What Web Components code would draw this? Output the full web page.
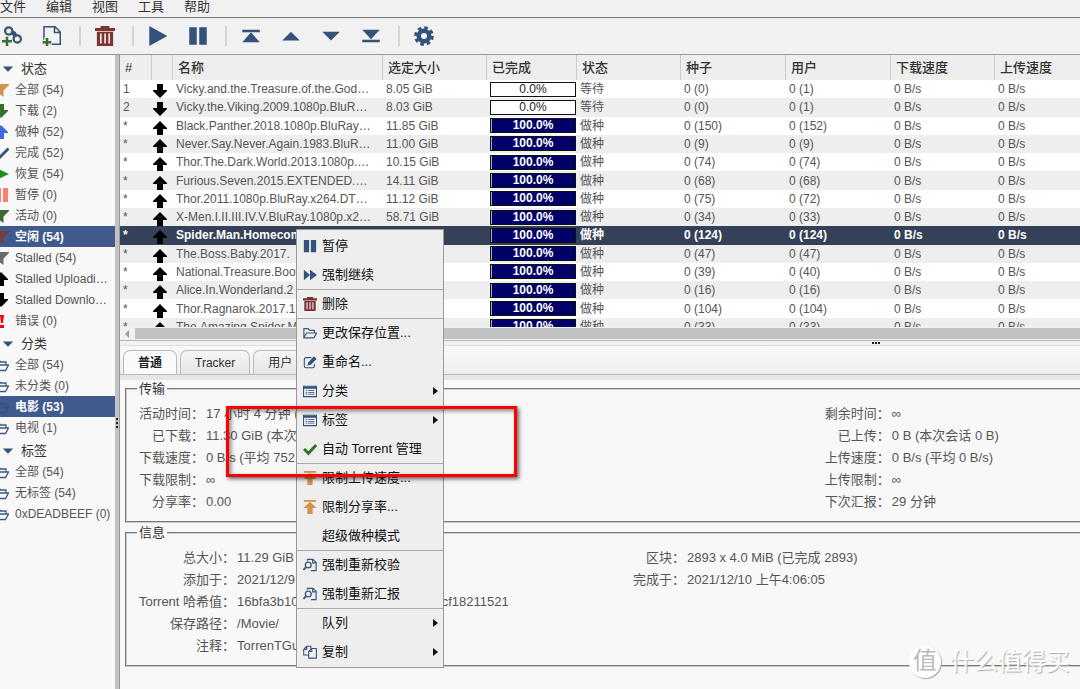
<!DOCTYPE html>
<html lang="zh-CN">
<head>
<meta charset="utf-8">
<meta name="viewport" content="width=device-width, initial-scale=1">
<title>qBittorrent Web UI</title>
<style>
  html, body { margin: 0; height: 100%; }
  body {
    font: 13px/18px "Liberation Sans", "Noto Sans CJK SC", sans-serif;
    color: #555;
    background: #f8f8f8;
    overflow: hidden;
  }
</style>
</head>
<body>
<torrent-app></torrent-app>
<script>
const define = (name, html, setup) => {
  const template = document.createElement('template');
  template.innerHTML = html;
  customElements.define(name, class extends HTMLElement {
    connectedCallback() {
      if (this.shadowRoot) return;
      const root = this.attachShadow({ mode: 'open' });
      root.append(template.content.cloneNode(true));
      if (setup) setup(this, root);
    }
  });
};

/* Icons, all on a 16 x 16 grid */
const navy = '#35527a', red = '#7d3333', green = '#37702f', orange = '#d3934a';
const funnel = c => `<path fill="${c}" d="M0 2h16v1l-5.500 5.500V15L5.500 11.500v-3L0 3z"/>`;
const arrowUp = c => `<path fill="${c}" d="M8 1l7 7v1h-4v6H5V9H1V8z"/>`;
const arrowDown = c => `<path fill="${c}" d="M8 15l7-7V7h-4V1H5v6H1v1z"/>`;
const folder = c => `<path fill="none" stroke="${c}" stroke-width="1.300" d="M1 13V3h5l1.500 2h5.500v3M1 13.500l3-5.500h11.500l-3 5.500z"/>`;
const icons = {
  link: `<g fill="none" stroke="${navy}" stroke-width="1.800"><circle cx="5.400" cy="3.900" r="2.900"/><circle cx="12.200" cy="10.300" r="2.900"/><path d="M6.500 6.500q2.500-1 3.500 1.500M8 4.500q3 .5 3 3"/></g><path stroke="${green}" stroke-width="2" d="M4 8.500v7.500M0 12.200h8"/>`,
  addfile: `<path fill="none" stroke="${navy}" stroke-width="1.200" d="M1.600 14.600V.6h8.800l4.200 4.200v9.800zM10 1v4.200h4.500"/><path stroke="#f1f1f1" stroke-width="4" d="M4 9v7M0 13h8"/><path stroke="${green}" stroke-width="2" d="M4 9.500V16M.5 13h7"/>`,
  trash: `<path fill="${red}" fill-rule="evenodd" d="M4.500 0h7v1.500H16V4H0V1.500h4.500zM1.500 4.500h13V16h-13zM4 6v8h1.300V6zM7.400 6v8h1.300V6zM10.700 6v8H12V6z"/>`,
  play: `<path fill="${navy}" d="M1 0l14.500 8L1 16z"/>`,
  pause: `<path fill="${navy}" d="M1 1h6v14H1zM9 1h6v14H9z"/>`,
  top: `<path fill="${navy}" d="M1 3h14v2H1zM8 5l7 8H1z"/>`,
  up: `<path fill="${navy}" d="M8 4.500l7 7H1z"/>`,
  down: `<path fill="${navy}" d="M8 11.500l-7-7h14z"/>`,
  bottom: `<path fill="${navy}" d="M1 11h14v2H1zM8 10.500L1 3h14z"/>`,
  gear: `<circle cx="8" cy="8" r="4.200" fill="none" stroke="${navy}" stroke-width="3.600"/><circle cx="8" cy="8" r="6.700" fill="none" stroke="${navy}" stroke-width="2.400" stroke-dasharray="2.900 2.360"/>`,
  caret: `<path fill="${navy}" d="M2 5h12l-6 6z"/>`,
  filterOrange: funnel(orange), filterGreen: funnel('#376b2f'), filterRed: funnel('#753c3c'), filterGrey: funnel('#6b6b6b'),
  downGreen: arrowDown('#37702f'), upBlue: arrowUp('#4169e1'), upBlack: arrowUp('#000'), downBlack: arrowDown('#000'),
  tick: `<path fill="none" stroke="${navy}" stroke-width="2.800" d="M2 8l4 5 9.500-9.500"/>`,
  resume: `<path fill="#228b22" d="M3 2l13 6-13 6z"/>`,
  pausePink: `<path fill="#fa8072" d="M3 1h5v14H3zM10 1h5v14h-5z"/>`,
  error: `<path fill="#f00" d="M7 2h4l-1 8H8zM7 12h4v3H7z"/>`,
  folder: folder('#3d5a80'), folderDim: folder('#34517d'),
  force: `<path fill="${navy}" d="M1 2l7 6-7 6zM8 2l8 6-8 6z"/>`,
  edit: `<path fill="none" stroke="${navy}" stroke-width="1.200" d="M9.500 3H3.500Q1.500 3 1.500 5v7.500q0 2 2 2h7.500q2 0 2-2V10"/><path fill="${navy}" d="M6 8.500l6.500-7 3 3L9 11l-4 1z"/>`,
  list: `<path fill="none" stroke="${navy}" stroke-width="1.200" d="M.6 2.600h14.800v11.800H.6z"/><path fill="${navy}" d="M1 3h14v2.500H1zM3 7h2v1H3zM6 7h7v1H6zM3 9h2v1H3zM6 9h7v1H6zM3 11h2v1H3zM6 11h7v1H6z"/>`,
  check: `<path fill="none" stroke="${green}" stroke-width="3.400" d="M1.200 8l5 5L15 3.500"/>`,
  limit: `<path fill="${orange}" d="M1 0h14v2H1zM8 2l7.500 7H11v7H5V9H.5z"/>`,
  recheck: `<g fill="none" stroke="${navy}" stroke-width="1.300"><path d="M5 3V1.500h6.500L15 5v9.500H9M11 1.500V5.500h4"/><circle cx="6" cy="8" r="3.300" stroke-width="1.500"/><path stroke-width="2" d="M3.500 10.500L.5 13.500"/></g>`,
  copy: `<g fill="#eee" stroke="${navy}" stroke-width="1.200"><path d="M7 11.500H.8V5l3.200-3.500h5V6M4.200 1.500V5H1"/><path d="M6.500 15V7.500L10 4h5.300v11zM10 4v3.500H6.500"/></g>`
};
define('ui-icon', `<style>:host{display:block;width:14px;height:14px;flex:none}svg{display:block;width:100%;height:100%}</style>
<svg viewBox="0 0 16 16" aria-hidden="true"></svg>`,
  (el, root) => { root.querySelector('svg').innerHTML = icons[el.getAttribute('name')] || ''; });

/* Menu bar and tool bar */
define('menu-bar', `<style>
:host{display:block;background:#f1f1f1;border-bottom:1px solid #777;color:#333}
nav{display:flex;gap:20px;padding-bottom:1px;height:16px;align-items:center}
button{all:unset;line-height:14px;padding-bottom:2px}
</style><nav><button>文件</button><button>编辑</button><button>视图</button><button>工具</button><button>帮助</button></nav>`);

define('tool-button', `<style>:host{display:block}button{all:unset;display:grid;place-items:center;width:24px;height:24px}ui-icon{width:20px;height:20px}</style><button><ui-icon></ui-icon></button>`,
  (el, root) => {
    root.querySelector('button').setAttribute('aria-label', el.getAttribute('label'));
    const old = root.querySelector('ui-icon'), icon = document.createElement('ui-icon');
    icon.setAttribute('name', el.getAttribute('icon'));
    old.replaceWith(icon);
  });

define('tool-bar', `<style>
:host{display:flex;align-items:center;height:36px;background:#f1f1f1;border-bottom:1px solid #999}
div{display:flex;gap:16px;padding:0 15px 0 12px;border-right:2px solid #d4d4d4;height:20px;align-items:center}
div:first-of-type{padding-left:0}div:last-of-type{border:0}
</style>
<div><tool-button icon="link" label="添加链接"></tool-button><tool-button icon="addfile" label="添加文件"></tool-button></div>
<div><tool-button icon="trash" label="删除"></tool-button></div>
<div><tool-button icon="play" label="继续"></tool-button><tool-button icon="pause" label="暂停"></tool-button></div>
<div><tool-button icon="top" label="置顶"></tool-button><tool-button icon="up" label="上移"></tool-button><tool-button icon="down" label="下移"></tool-button><tool-button icon="bottom" label="置底"></tool-button></div>
<div><tool-button icon="gear" label="选项"></tool-button></div>`);

/* Side bar */
define('filter-group', `<style>
:host{display:block}
h2{display:flex;align-items:center;gap:6px;margin:0;padding:3px 0 0 1px;height:20px;font:inherit;font-size:13px;color:#333}
</style><section><h2><ui-icon name="caret"></ui-icon><span></span></h2><slot></slot></section>`,
  (el, root) => { root.querySelector('span').textContent = el.getAttribute('heading'); });

define('filter-item', `<style>
:host{display:block}
a{display:flex;align-items:center;gap:6px;height:21px;margin-left:-7px;color:inherit;text-decoration:none;white-space:nowrap}
ui-icon{width:16px;height:16px}
:host([selected]){background:#415a8d;color:#fff;font-weight:bold}
</style><a href="#"><slot name="icon"></slot><slot></slot></a>`,
  (el, root) => {
    const icon = document.createElement('ui-icon');
    icon.setAttribute('name', el.getAttribute('icon'));
    root.querySelector('slot').replaceWith(icon);
  });

define('side-bar', `<style>
:host{display:block;width:115px;flex:none;overflow:hidden;padding-top:1px;box-sizing:border-box;background:#f8f8f8;font-size:12px}
</style>
<filter-group heading="状态">
<filter-item icon="filterOrange">全部 (54)</filter-item>
<filter-item icon="downGreen">下载 (2)</filter-item>
<filter-item icon="upBlue">做种 (52)</filter-item>
<filter-item icon="tick">完成 (52)</filter-item>
<filter-item icon="resume">恢复 (54)</filter-item>
<filter-item icon="pausePink">暂停 (0)</filter-item>
<filter-item icon="filterGreen">活动 (0)</filter-item>
<filter-item icon="filterRed" selected>空闲 (54)</filter-item>
<filter-item icon="filterGrey">Stalled (54)</filter-item>
<filter-item icon="upBlack">Stalled Uploadi…</filter-item>
<filter-item icon="downBlack">Stalled Downlo…</filter-item>
<filter-item icon="error">错误 (0)</filter-item>
</filter-group>
<filter-group heading="分类">
<filter-item icon="folder">全部 (54)</filter-item>
<filter-item icon="folder">未分类 (0)</filter-item>
<filter-item icon="folderDim" selected>电影 (53)</filter-item>
<filter-item icon="folder">电视 (1)</filter-item>
</filter-group>
<filter-group heading="标签">
<filter-item icon="folder">全部 (54)</filter-item>
<filter-item icon="folder">无标签 (54)</filter-item>
<filter-item icon="folder">0xDEADBEEF (0)</filter-item>
</filter-group>`);

define('split-handle', `<style>
:host{display:flex;align-items:center;justify-content:center;flex:none;gap:1px}
i{width:2px;height:2px;background:#222}
:host([vertical]){flex-direction:column;width:4px;background:#c2c2c2;border-right:1px solid #999;gap:2px;padding-top:102px}
:host(:not([vertical])){height:4px;background:#f2f2f2;border-top:1px solid #b5b5b5;border-bottom:1px solid #ddd;padding-left:552px}
</style><i></i><i></i><i></i>`);

/* Torrent table */
const torrents = [
  ['1', 'Vicky.and.the.Treasure.of.the.God…', '8.05 GiB', 0, '0 (0)', '0 (1)'],
  ['2', 'Vicky.the.Viking.2009.1080p.BluR…', '8.03 GiB', 0, '0 (0)', '0 (1)'],
  ['*', 'Black.Panther.2018.1080p.BluRay…', '11.85 GiB', 100, '0 (150)', '0 (152)'],
  ['*', 'Never.Say.Never.Again.1983.BluR…', '11.00 GiB', 100, '0 (9)', '0 (9)'],
  ['*', 'Thor.The.Dark.World.2013.1080p.…', '10.15 GiB', 100, '0 (74)', '0 (74)'],
  ['*', 'Furious.Seven.2015.EXTENDED.…', '14.11 GiB', 100, '0 (68)', '0 (68)'],
  ['*', 'Thor.2011.1080p.BluRay.x264.DT…', '11.12 GiB', 100, '0 (75)', '0 (72)'],
  ['*', 'X-Men.I.II.III.IV.V.BluRay.1080p.x2…', '58.71 GiB', 100, '0 (34)', '0 (33)'],
  ['*', 'Spider.Man.Homecom', '', 100, '0 (124)', '0 (124)'],
  ['*', 'The.Boss.Baby.2017.', '', 100, '0 (47)', '0 (47)'],
  ['*', 'National.Treasure.Boo', '', 100, '0 (39)', '0 (40)'],
  ['*', 'Alice.In.Wonderland.2', '', 100, '0 (16)', '0 (16)'],
  ['*', 'Thor.Ragnarok.2017.1', '', 100, '0 (104)', '0 (104)'],
  ['*', 'The.Amazing.Spider.M', '', 100, '0 (33)', '0 (33)']
];
define('progress-bar', `<style>
:host{display:block;margin-right:1px;height:13px;border:1px solid #111;background:#fff;color:#222;text-align:center;line-height:13px}
:host([value="100"]){background:#000068;color:#fff;font-weight:bold;box-shadow:inset 1px 0 #aaa}
</style><div role="progressbar"></div>`,
  (el, root) => { root.querySelector('div').textContent = Number(el.getAttribute('value')).toFixed(1) + '%'; });

define('torrent-table', `<style>
:host{display:block;height:272px;overflow:hidden;font-size:12px;line-height:14px}
table{table-layout:fixed;border-collapse:separate;border-spacing:0;width:100%;height:281px}
th{height:25px;box-sizing:border-box;padding:0 0 0 5px;text-align:left;font-weight:500;font-size:13px;color:#333;background:#eee;border-right:1px solid #ccc}
th:last-child{border:0}
td{padding:0 0 0 3px;white-space:nowrap;overflow:hidden}
td:nth-child(2){padding:0}
tbody tr{background:#fff}tbody tr:nth-child(even){background:#eee}
tbody tr.selected{background:#354158;color:#fff;font-weight:bold}
ui-icon{width:16px;height:16px;margin:3px 0 -1px}
</style>
<table><colgroup><col style="width:32px"><col style="width:21px"><col style="width:210px"><col style="width:104px"><col style="width:90px"><col style="width:104px"><col style="width:105px"><col style="width:105px"><col style="width:104px"><col></colgroup>
<thead><tr><th>#</th><th></th><th>名称</th><th>选定大小</th><th>已完成</th><th>状态</th><th>种子</th><th>用户</th><th>下载速度</th><th>上传速度</th></tr></thead><tbody></tbody></table>`,
  (el, root) => {
    root.querySelector('tbody').innerHTML = torrents.map(([n, name, size, done, seeds, peers]) => `
      <tr${peers === '0 (124)' ? ' class="selected"' : ''}><td>${n}</td><td><ui-icon name="${done ? 'upBlack' : 'downBlack'}"></ui-icon></td>
      <td>${name}</td><td>${size}</td><td><progress-bar value="${done}"></progress-bar></td><td>${done ? '做种' : '等待'}</td>
      <td>${seeds}</td><td>${peers}</td><td>0 B/s</td><td>0 B/s</td></tr>`).join('');
  });

define('scroll-strip', `<style>
:host{display:flex;align-items:center;height:11px;padding:1px 0;background:#f1f1f1}
b{border:4px solid transparent;border-left:0;border-right:4px solid #999;margin:0 6px 0 5px}
i{flex:1;height:11px;background:#c1c1c1}
</style><b></b><i></i>`);

/* Tabs */
define('tab-strip', `<style>
:host{display:flex;align-items:flex-end;gap:3px;height:28px;padding-left:3px;background:linear-gradient(#fafafa,#eee);border-bottom:1px solid #bbb;box-shadow:0 5px #e6e6e6;margin-bottom:5px}
button{box-sizing:border-box;height:24px;padding:0 14px;border:1px solid #bbb;border-bottom:0;border-radius:7px 7px 0 0;background:linear-gradient(#f6f6f6,#e4e4e4);font:inherit;font-size:12px;color:#333}
button[aria-selected=true]{background:#fafafa;font-weight:bold;color:#222}
</style><button role="tab" aria-selected="true">普通</button><button role="tab">Tracker</button><button role="tab">用户</button>`);

/* Detail boxes */
define('detail-group', `<style>
:host{display:block;margin:0 -4px 1px 5px}
fieldset{min-width:0;box-sizing:border-box;margin:0;padding:5px 0 8px 12px;border:2px groove #ccc;height:143px}
legend{padding:0 2px;margin-left:-2px;line-height:18px;color:#333}
div{display:grid;grid-template-columns:var(--split);align-items:start}
</style><fieldset><legend></legend><div><slot></slot></div></fieldset>`,
  (el, root) => { root.querySelector('legend').textContent = el.getAttribute('heading'); });

define('detail-list', `<style>
:host{display:block;min-width:0}
dl{display:grid;grid-template-columns:max-content 1fr;column-gap:2px;margin:0;line-height:22px;white-space:nowrap}
dt{text-align:right}dd{margin:0}
</style><dl></dl>`,
  (el, root) => {
    root.querySelector('dl').innerHTML = el.getAttribute('rows').split('|').map(row => {
      const [term, value] = row.split('=');
      return `<dt>${term}：</dt><dd>${value}</dd>`;
    }).join('');
  });

define('detail-pane', `<style>:host{display:block}</style>
<detail-group heading="传输" style="--split:8fr 3fr">
<detail-list rows="活动时间=17 小时 4 分钟 (本|已下载=11.30 GiB (本次会|下载速度=0 B/s (平均 752.6|下载限制=∞|分享率=0.00"></detail-list>
<detail-list rows="剩余时间=∞|已上传=0 B (本次会话 0 B)|上传速度=0 B/s (平均 0 B/s)|上传限制=∞|下次汇报=29 分钟"></detail-list>
</detail-group>
<detail-group heading="信息" style="--split:11fr 10fr">
<detail-list rows="总大小=11.29 GiB|添加于=2021/12/9 下|Torrent 哈希值=16bfa3b104da2c8e1d6f7fa930c5e1cf18211521|保存路径=/Movie/|注释=TorrenTGui"></detail-list>
<detail-list rows="区块=2893 x 4.0 MiB (已完成 2893)|完成于=2021/12/10 上午4:06:05"></detail-list>
</detail-group>`);

/* Context menu */
define('menu-item', `<style>
:host{display:block;box-sizing:border-box;height:29px}
:host([divided]){border-top:1px solid #aaa}
button{all:unset;display:flex;align-items:center;gap:5px;box-sizing:border-box;width:100%;height:100%;padding:0 5px 0 6px;white-space:nowrap}
b{margin-left:auto;border:4px solid transparent;border-left:5px solid #111;border-right:0}
</style><button><ui-icon></ui-icon><slot></slot></button>`,
  (el, root) => {
    const icon = document.createElement('ui-icon');
    icon.setAttribute('name', el.getAttribute('icon') || '');
    root.querySelector('ui-icon').replaceWith(icon);
    if (el.hasAttribute('submenu')) root.querySelector('button').append(document.createElement('b'));
  });

define('context-menu', `<style>
:host{display:block;position:absolute;left:296px;top:229px;width:148px;box-sizing:border-box;padding:1px 0;background:#eee;border:1px solid #999;color:#111}
</style>
<menu-item icon="pause">暂停</menu-item>
<menu-item icon="force">强制继续</menu-item>
<menu-item icon="trash" divided>删除</menu-item>
<menu-item icon="folder" divided>更改保存位置...</menu-item>
<menu-item icon="edit">重命名...</menu-item>
<menu-item icon="list" submenu>分类</menu-item>
<menu-item icon="list" submenu>标签</menu-item>
<menu-item icon="check">自动 Torrent 管理</menu-item>
<menu-item icon="limit" divided>限制上传速度...</menu-item>
<menu-item icon="limit">限制分享率...</menu-item>
<menu-item>超级做种模式</menu-item>
<menu-item icon="recheck" divided>强制重新校验</menu-item>
<menu-item icon="recheck">强制重新汇报</menu-item>
<menu-item submenu divided>队列</menu-item>
<menu-item icon="copy" submenu>复制</menu-item>`);

/* Marker box and site mark that lie over the window */
define('marker-box', `<style>:host{display:block;position:absolute;left:226px;top:406px;width:291px;height:71px;box-sizing:border-box;border:3px solid #f00;box-shadow:2px 2px 4px #0009,inset 2px 2px 4px #0007}</style>`);
define('site-mark', `<style>
:host{display:flex;align-items:center;gap:9px;position:absolute;right:10px;bottom:10px;color:#fff;font-size:24px;line-height:34px;text-shadow:1px 1px 1px #aaa}
span{width:32px;height:32px;line-height:30px;border-radius:50%;background:#fff;box-shadow:1px 1px 1px #aaa;color:#bbb;text-align:center;text-shadow:none}
</style><span>值</span>什么值得买`);

define('torrent-app', `<style>
:host{display:flex;flex-direction:column;height:100vh;position:relative;overflow:hidden}
main{display:flex;flex:1;min-height:0}
section{flex:1;min-width:0;overflow:hidden}
</style>
<menu-bar></menu-bar><tool-bar></tool-bar>
<main><side-bar></side-bar><split-handle vertical></split-handle>
<section><torrent-table></torrent-table><scroll-strip></scroll-strip><split-handle></split-handle><tab-strip></tab-strip><detail-pane></detail-pane></section></main>
<context-menu></context-menu><marker-box></marker-box><site-mark></site-mark>`);
</script>
</body>
</html>
